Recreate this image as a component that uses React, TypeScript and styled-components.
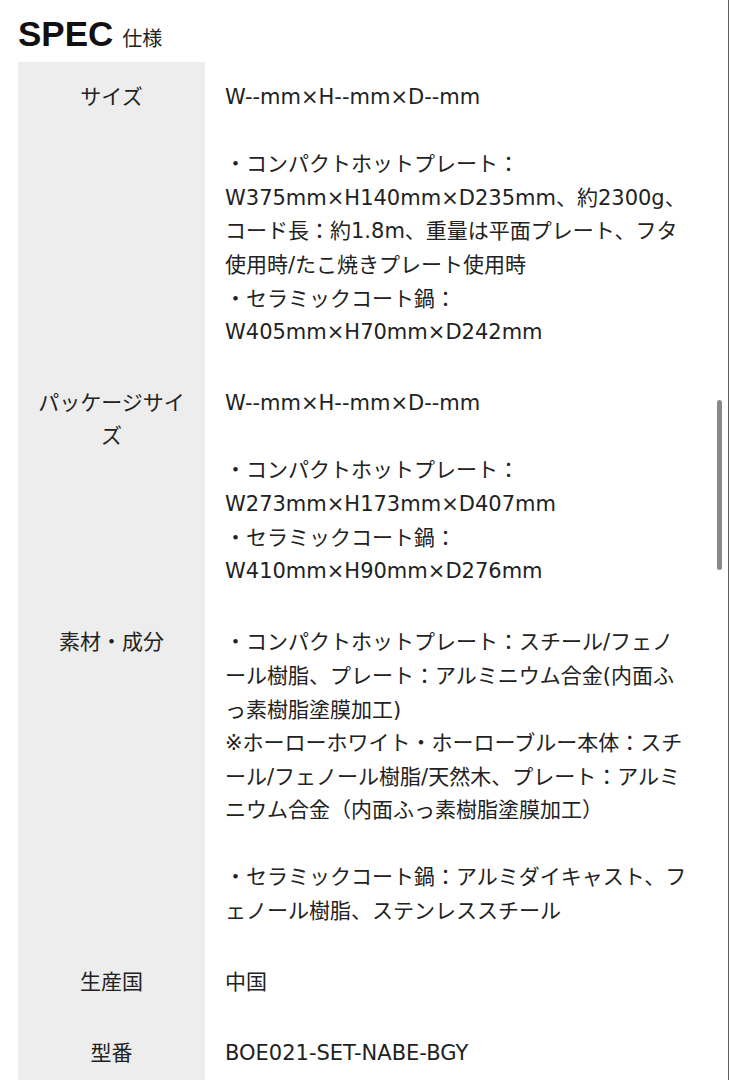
import React from 'react';
import styled, { createGlobalStyle } from 'styled-components';

const GlobalStyle = createGlobalStyle`
    html, body {
        margin: 0;
        padding: 0;
        background: #fff;
    }
    body {
        font-family: "DejaVu Sans", "Noto Sans CJK JP", sans-serif;
        color: #262626;
    }
`;

const Page = styled.div`
    width: 729px;
    box-sizing: border-box;
    padding: 0 0 0 18px;
    border-right: 1px solid #5e5e5e;
    line-break: normal;
`;

const Heading = styled.h2`
    margin: 0;
    height: 62px;
    box-sizing: border-box;
    padding-top: 14px;
    display: flex;
    align-items: baseline;
    gap: 9px;
`;

const HeadingMain = styled.span`
    font-family: "Liberation Sans", Arial, sans-serif;
    font-weight: 700;
    font-size: 35px;
    line-height: 40px;
    color: #111;
`;

const HeadingSub = styled.span`
    font-family: "Noto Sans CJK JP", sans-serif;
    font-weight: 400;
    font-size: 20px;
    line-height: 40px;
    color: #222;
`;

const Table = styled.dl`
    margin: 0;
    display: grid;
    grid-template-columns: 187px 505px;
`;

const Label = styled.dt`
    background: #ededed;
    padding: 18.5px 19px 18.5px;
    font-size: 21px;
    line-height: 33.6px;
    text-align: center;
    color: #222;
`;

const Value = styled.dd`
    margin: 0;
    padding: 19px 20px 18.5px;
    font-size: 21px;
    line-height: 33.6px;
    white-space: pre-line;
    color: #222;
`;

const ScrollThumb = styled.div`
    position: fixed;
    top: 400px;
    right: 7px;
    width: 5px;
    height: 170px;
    border-radius: 3px;
    background: #8a8a8a;
`;

const specs = [
    {
        label: 'サイズ',
        value: [
            'W--mm×H--mm×D--mm',
            '',
            '・コンパクトホットプレート：',
            'W375mm×H140mm×D235mm、約2300g、',
            'コード長：約1.8m、重量は平面プレート、フタ使用時/たこ焼きプレート使用時',
            '・セラミックコート鍋：',
            'W405mm×H70mm×D242mm',
        ],
    },
    {
        label: 'パッケージサイズ',
        value: [
            'W--mm×H--mm×D--mm',
            '',
            '・コンパクトホットプレート：',
            'W273mm×H173mm×D407mm',
            '・セラミックコート鍋：',
            'W410mm×H90mm×D276mm',
        ],
    },
    {
        label: '素材・成分',
        value: [
            '・コンパクトホットプレート：スチール/フェノール樹脂、プレート：アルミニウム合金(内面ふっ素樹脂塗膜加工)',
            '※ホーローホワイト・ホーローブルー本体：スチール/フェノール樹脂/天然木、プレート：アルミニウム合金（内面ふっ素樹脂塗膜加工）',
            '',
            '・セラミックコート鍋：アルミダイキャスト、フェノール樹脂、ステンレススチール',
        ],
    },
    { label: '生産国', value: ['中国'] },
    { label: '型番', value: ['BOE021-SET-NABE-BGY'] },
];

const App = () => {
    return (
        <>
            <GlobalStyle />
            <Page lang="ja">
                <Heading>
                    <HeadingMain>SPEC</HeadingMain>
                    <HeadingSub>仕様</HeadingSub>
                </Heading>
                <Table>
                    {specs.map((spec) => (
                        <React.Fragment key={spec.label}>
                            <Label>{spec.label}</Label>
                            <Value>{spec.value.join('\n')}</Value>
                        </React.Fragment>
                    ))}
                </Table>
            </Page>
            <ScrollThumb />
        </>
    );
};

export default App;
